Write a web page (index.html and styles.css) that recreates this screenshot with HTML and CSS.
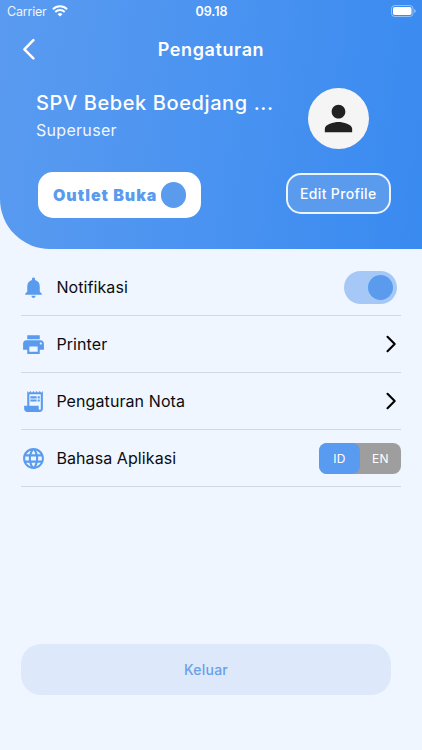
FILE: index.html
```html
<!DOCTYPE html>
<html lang="id">
<head>
<meta charset="utf-8">
<title>Pengaturan</title>
<link rel="stylesheet" href="styles.css">
</head>
<body>
<div class="screen">
  <header class="hero">
    <div class="status">
      <div class="status-left">
        <span class="carrier">Carrier</span>
        <svg class="wifi" viewBox="0 0 16 12" width="16" height="12" fill="none" stroke="#fff" stroke-width="1.9">
          <path d="M.9 4.200a10.200 10.200 0 0 1 14.200 0M3.300 7a6.700 6.700 0 0 1 9.400 0"/>
          <path d="M8 11.600 5.600 9.200a3.500 3.500 0 0 1 4.800 0z" fill="#fff" stroke="none"/>
        </svg>
      </div>
      <span class="time">09.18</span>
      <svg class="battery" viewBox="0 0 25 12" width="25" height="12">
        <rect x=".5" y=".5" width="21.500" height="11" rx="3.200" fill="none" stroke="#fff" stroke-opacity=".45"/>
        <rect x="2" y="2" width="18.500" height="8" rx="1.800" fill="#fff"/>
        <path d="M23.200 4v4a2.100 2.100 0 0 0 0-4" fill="#fff" fill-opacity=".5"/>
      </svg>
    </div>
    <div class="navbar">
      <svg class="back" viewBox="0 0 14 22" width="14" height="22" fill="none" stroke="#fff" stroke-width="2.500" stroke-linecap="round" stroke-linejoin="round"><path d="M11.400 2.200 2.400 11.300l9 9"/></svg>
      <h1>Pengaturan</h1>
    </div>
    <div class="profile">
      <div class="who">
        <div class="name">SPV Bebek Boedjang ...</div>
        <div class="role">Superuser</div>
      </div>
      <div class="avatar">
        <svg viewBox="0 0 24 24" width="41" height="41" fill="#212121"><path d="M12 12c2.210 0 4-1.790 4-4s-1.790-4-4-4-4 1.790-4 4 1.790 4 4 4zm0 2c-2.670 0-8 1.340-8 4v2h16v-2c0-2.660-5.330-4-8-4z"/></svg>
      </div>
    </div>
    <div class="actions">
      <div class="outlet"><span>Outlet Buka</span><i class="dot"></i></div>
      <div class="edit">Edit Profile</div>
    </div>
  </header>
  <main class="list">
    <div class="row">
      <svg class="icon" viewBox="0 0 24 24"><path d="M12 22c1.100 0 2-.9 2-2h-4c0 1.100.89 2 2 2zm6-6v-5c0-3.070-1.640-5.640-4.500-6.320V4c0-.83-.67-1.500-1.500-1.500s-1.500.67-1.500 1.500v.68C7.630 5.360 6 7.920 6 11v5l-2 2v1h16v-1l-2-2z"/></svg>
      <span class="label">Notifikasi</span>
      <div class="switch"><i class="knob"></i></div>
    </div>
    <div class="row">
      <svg class="icon" viewBox="0 0 24 24"><path d="M19 8H5c-1.660 0-3 1.340-3 3v6h4v4h12v-4h4v-6c0-1.660-1.340-3-3-3zm-3 11H8v-5h8v5zm3-7c-.55 0-1-.45-1-1s.45-1 1-1 1 .45 1 1-.45 1-1 1zm-1-9H6v4h12V3z"/></svg>
      <span class="label">Printer</span>
      <svg class="chevron" viewBox="0 0 12 18" width="12" height="18"><path d="M2.500 1.800 9.700 9 2.500 16.200"/></svg>
    </div>
    <div class="row">
      <svg class="icon" viewBox="0 0 24 24"><path d="M19.500 3.500 18 2l-1.500 1.500L15 2l-1.500 1.500L12 2l-1.500 1.500L9 2 7.500 3.500 6 2v14H3v3c0 1.660 1.340 3 3 3h12c1.660 0 3-1.340 3-3V2l-1.500 1.500zM19 19c0 .55-.45 1-1 1s-1-.45-1-1v-3H8V5h11v14z"/><path d="M9 7h6v2H9zM16 7h2v2h-2zM9 10h6v2H9zM16 10h2v2h-2z"/></svg>
      <span class="label">Pengaturan Nota</span>
      <svg class="chevron" viewBox="0 0 12 18" width="12" height="18"><path d="M2.500 1.800 9.700 9 2.500 16.200"/></svg>
    </div>
    <div class="row">
      <svg class="icon" viewBox="0 0 24 24"><path d="M11.990 2C6.470 2 2 6.480 2 12s4.470 10 9.990 10C17.520 22 22 17.520 22 12S17.520 2 11.990 2zm6.930 6h-2.950c-.32-1.250-.78-2.450-1.380-3.560 1.840.63 3.370 1.910 4.330 3.560zM12 4.040c.83 1.200 1.480 2.530 1.910 3.960h-3.820c.43-1.430 1.080-2.760 1.910-3.960zM4.260 14C4.100 13.360 4 12.690 4 12s.1-1.360.26-2h3.380c-.08.66-.14 1.320-.14 2s.06 1.340.14 2H4.260zm.82 2h2.950c.32 1.250.78 2.450 1.380 3.560-1.840-.63-3.370-1.900-4.330-3.560zm2.950-8H5.080c.96-1.660 2.490-2.930 4.330-3.560C8.810 5.550 8.350 6.750 8.030 8zM12 19.960c-.83-1.200-1.480-2.530-1.910-3.960h3.820c-.43 1.430-1.080 2.760-1.910 3.960zM14.340 14H9.660c-.09-.66-.16-1.320-.16-2s.07-1.350.16-2h4.680c.09.65.16 1.320.16 2s-.07 1.340-.16 2zm.25 5.560c.6-1.110 1.060-2.310 1.380-3.560h2.950c-.96 1.650-2.490 2.930-4.330 3.560zM16.360 14c.08-.66.14-1.320.14-2s-.06-1.340-.14-2h3.380c.16.64.26 1.310.26 2s-.1 1.360-.26 2h-3.380z"/></svg>
      <span class="label">Bahasa Aplikasi</span>
      <div class="lang"><span class="on">ID</span><span class="off">EN</span></div>
    </div>
  </main>
  <div class="logout">Keluar</div>
</div>
</body>
</html>
```
FILE: styles.css
```css
* { box-sizing: border-box; }
body {
  margin: 0;
  font-family: Inter, "Liberation Sans", sans-serif;
  background: #eff6ff;
}
.screen {
  width: 422px;
  height: 750px;
  display: flex;
  flex-direction: column;
  overflow: hidden;
}
.hero {
  height: 248.5px;
  flex: none;
  border-bottom-left-radius: 50px;
  background: linear-gradient(97deg, #5a9bf0, #4a93f1 50%, #398af0);
  color: #fff;
}
.status {
  height: 22px;
  display: grid;
  grid-template-columns: 1fr auto 1fr;
  align-items: center;
  padding: 0 6px 0 7px;
}
.status-left { display: flex; align-items: center; gap: 5px; }
.carrier { font-size: 12.5px; letter-spacing: -.2px; opacity: .9; }
.time { font-size: 12.5px; font-weight: 600; }
.battery { justify-self: end; margin-bottom: 1px; }
.wifi { margin-bottom: 1px; }
.navbar {
  height: 54px;
  display: grid;
  grid-template-columns: 22px 1fr 22px;
  align-items: center;
  padding: 0 22px;
}
h1 {
  margin: 0;
  text-align: center;
  font-size: 18px;
  font-weight: 600;
  letter-spacing: .6px;
}
.profile {
  display: flex;
  justify-content: space-between;
  padding: 12px 53px 0 36px;
}
.name { margin-top: 3px; font-size: 20px; line-height: 24px; font-weight: 500; letter-spacing: .6px; white-space: nowrap; }
.role { margin-top: 5px; font-size: 16px; line-height: 20px; letter-spacing: .3px; opacity: .92; }
.avatar {
  width: 61px;
  height: 61px;
  border-radius: 50%;
  background: #f5f5f5;
  display: flex;
  align-items: center;
  justify-content: center;
}
.actions {
  display: flex;
  justify-content: space-between;
  align-items: flex-start;
  padding: 23px 31px 0 38.4px;
}
.outlet {
  width: 163px;
  height: 46px;
  border-radius: 15px;
  background: #fff;
  color: #5a9bee;
  display: flex;
  align-items: center;
  justify-content: space-between;
  padding: 0 15px 0 14.6px;
  font-size: 16px;
  font-weight: 900;
  letter-spacing: .98px;
  white-space: nowrap;
}
.dot { width: 25.5px; height: 25.5px; border-radius: 50%; background: #5a9bee; }
.edit {
  width: 105.5px;
  height: 41.5px;
  margin-top: .6px;
  border: 2px solid rgba(255, 255, 255, .9);
  border-radius: 15px;
  background: #5a9bee;
  background-clip: padding-box;
  display: flex;
  align-items: center;
  justify-content: center;
  font-size: 14px;
  font-weight: 500;
  letter-spacing: .34px;
}
.list { padding: 10.5px 21px 0; }
.row {
  height: 57px;
  display: flex;
  align-items: center;
  border-bottom: 1px solid #d3d8e2;
}
.icon { width: 25px; height: 25px; fill: #5a9bee; flex: none; }
.label { flex: 1; margin-left: 10.4px; font-size: 16px; letter-spacing: .09px; color: #0b0c0e; }
.chevron { margin-right: 4px; fill: none; stroke: #000; stroke-width: 2.1; stroke-linecap: round; stroke-linejoin: round; }
.switch {
  width: 53px;
  height: 33px;
  margin-right: 4px;
  border-radius: 17px;
  background: #a5c8f7;
  display: flex;
  align-items: center;
  justify-content: flex-end;
  padding-right: 4px;
}
.knob { width: 25px; height: 25px; border-radius: 50%; background: #5a9bee; }
.lang {
  width: 82px;
  height: 31px;
  border-radius: 8px;
  background: #9e9e9e;
  display: flex;
  color: #fff;
  font-size: 12px;
  letter-spacing: .4px;
}
.lang span { flex: 1; display: flex; align-items: center; justify-content: center; }
.on { border-radius: 8px; background: #5a9bf2; }
.logout {
  width: 370px;
  height: 51px;
  margin: 157px 0 0 21px;
  border-radius: 20px;
  background: #dde9fb;
  color: #6b9fe6;
  display: flex;
  align-items: center;
  justify-content: center;
  font-size: 14px;
  font-weight: 500;
  letter-spacing: .2px;
}
```
